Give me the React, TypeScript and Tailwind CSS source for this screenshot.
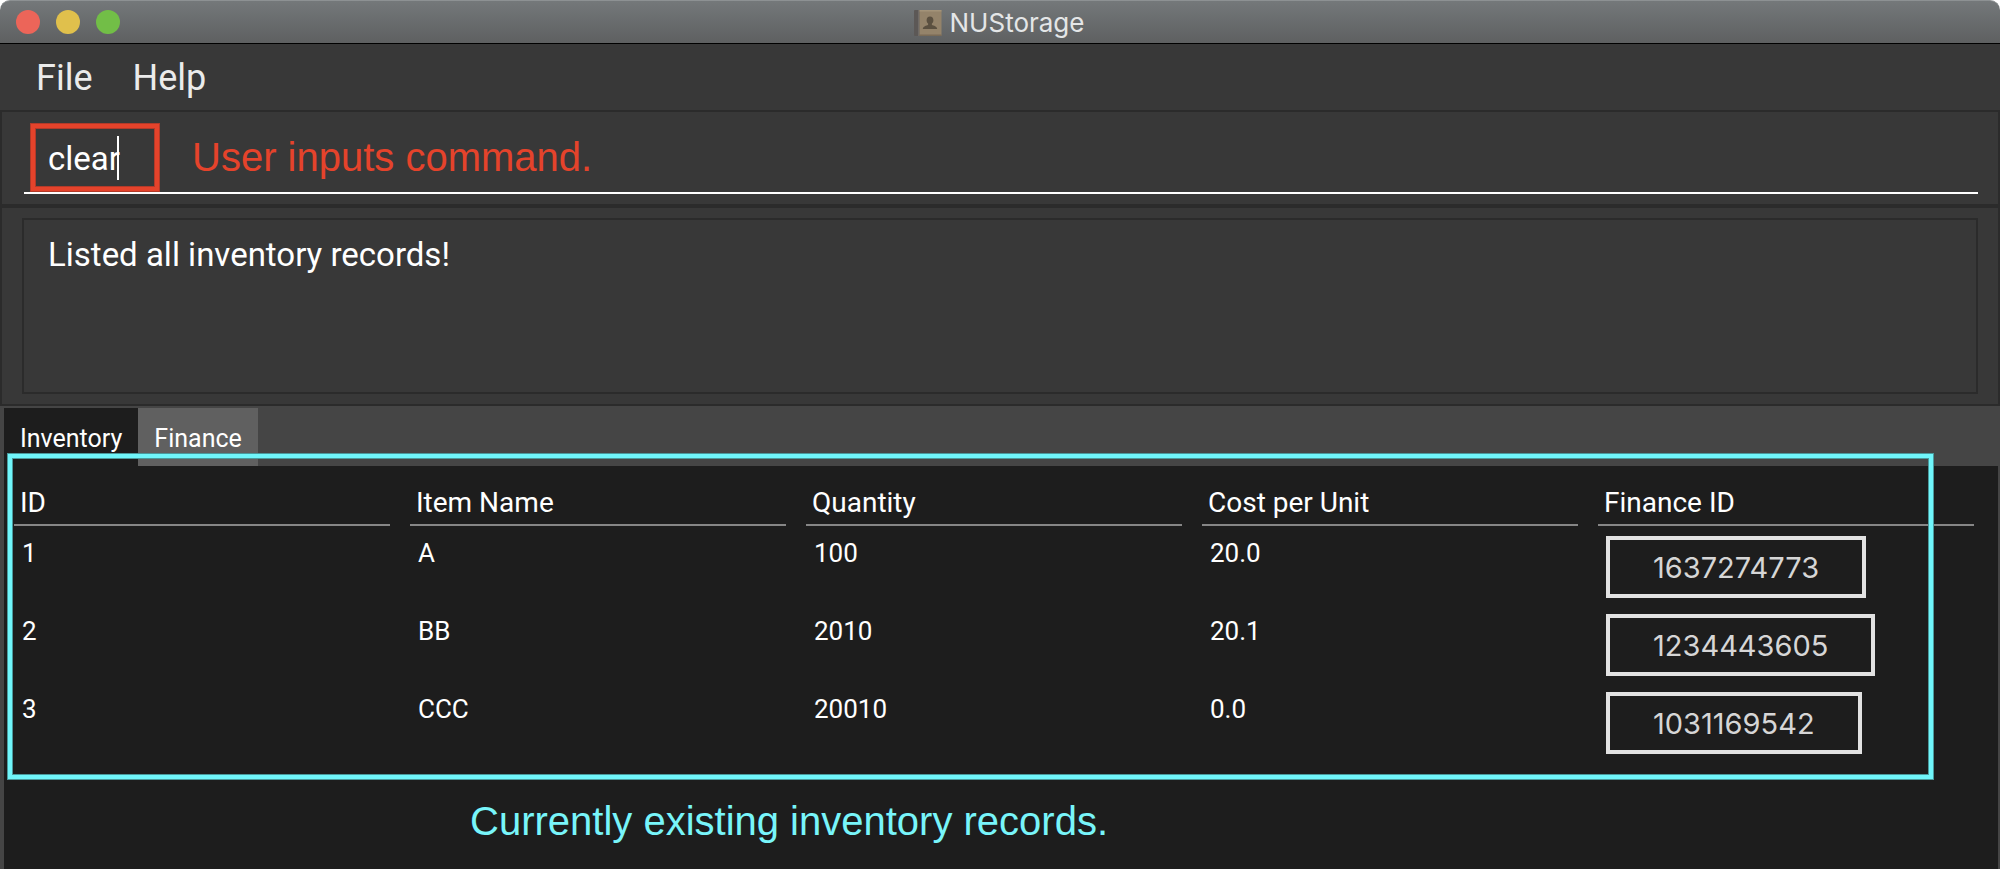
import { useState } from "react";

type InventoryItem = {
  id: number;
  name: string;
  quantity: string;
  cost: string;
  financeId: string;
};

const items: InventoryItem[] = [
  { id: 1, name: "A", quantity: "100", cost: "20.0", financeId: "1637274773" },
  { id: 2, name: "BB", quantity: "2010", cost: "20.1", financeId: "1234443605" },
  { id: 3, name: "CCC", quantity: "20010", cost: "0.0", financeId: "1031169542" },
];

const columns = ["ID", "Item Name", "Quantity", "Cost per Unit", "Finance ID"];

function AddressBookIcon() {
  return (
    <svg width="28" height="26" viewBox="0 0 28 26" aria-hidden="true">
      <rect x="0" y="0" width="6" height="26" rx="1" fill="#5c5856" />
      <rect x="4" y="0" width="1.5" height="26" fill="#6f6a66" />
      <rect x="5.5" y="0" width="22" height="26" rx="1" fill="#94836a" />
      <rect x="5.5" y="0" width="22" height="1.5" fill="#a39379" />
      <rect x="5.5" y="24.5" width="22" height="1.5" fill="#7a6b56" />
      <path
        d="M16 6.5c2.2 0 3.4 1.5 3.4 3.7 0 1.5-.6 2.6-1.5 3.4v1.4c1.9.7 5 1.2 5.3 4H8.8c.3-2.8 3.4-3.3 5.3-4v-1.4c-.9-.8-1.5-1.9-1.5-3.4 0-2.200 1.200-3.700 3.400-3.700z"
        fill="#5b5040"
      />
    </svg>
  );
}

function TitleBar() {
  return (
    <header className="relative flex h-11 items-center justify-center rounded-t-[10px] border-y border-t-[#8d9193] border-b-black bg-linear-to-b from-[#74787a] to-[#5e6061]">
      <div className="absolute left-4 flex gap-4">
        <button aria-label="Close" className="size-6 rounded-full bg-[#ec6559]" />
        <button aria-label="Minimize" className="size-6 rounded-full bg-[#e0c04c]" />
        <button aria-label="Zoom" className="size-6 rounded-full bg-[#72be47]" />
      </div>
      <div className="flex items-center gap-2 pt-[2px] pr-[2px]">
        <AddressBookIcon />
        <h1 className="font-['Inter',sans-serif] text-[26px] leading-8 text-[#e4e6e7]">NUStorage</h1>
      </div>
    </header>
  );
}

function CommandBox() {
  const [command, setCommand] = useState("clear");
  return (
    <section className="relative border-2 border-[#2b2b2b] pt-3 pr-5 pb-[10px] pl-[22px]">
      <input
        aria-label="Command"
        value={command}
        onChange={(e) => setCommand(e.target.value)}
        className="block h-[70px] w-full border-b-2 border-white bg-transparent pl-6 text-[33px] text-white outline-none"
      />
      <span className="absolute top-6 left-[115px] h-11 w-[2px] bg-white" />
      <div className="absolute top-3 left-[29px] h-[67px] w-32 border-4 border-[#e5432b] ring-1 inset-ring-1 ring-[#b33a29] inset-ring-[#b33a29]" />
      <p className="absolute top-[21px] left-[190px] font-['Liberation_Sans',sans-serif] text-[40px] leading-12 text-[#e5432b]">
        User inputs command.
      </p>
    </section>
  );
}

export default function App() {
  const [tab, setTab] = useState("Inventory");
  return (
    <div className="flex min-h-screen flex-col bg-white font-['Roboto',sans-serif]">
      <TitleBar />
      <div className="flex grow flex-col bg-[#383838]">
        <nav className="flex h-[66px] items-center gap-10 px-9 pt-[2px] text-[36px] text-[#ebebeb]">
          <button>File</button>
          <button>Help</button>
        </nav>
        <CommandBox />
        <section className="border-2 border-[#2b2b2b] px-5 py-[10px]">
          <output className="block h-44 border-2 border-[#2b2b2b] px-6 py-3 text-[33px] leading-[46px] text-white">
            Listed all inventory records!
          </output>
        </section>
        <main className="relative flex grow flex-col bg-[#454545] pt-[2px] pr-[2px] pl-1">
          <div role="tablist" className="flex h-[58px] text-[25px] text-white">
            <button
              role="tab"
              aria-selected={tab === "Inventory"}
              onClick={() => setTab("Inventory")}
              className="bg-[#606060] px-4 pt-1 aria-selected:bg-[#1d1d1d]"
            >
              Inventory
            </button>
            <button
              role="tab"
              aria-selected={tab === "Finance"}
              onClick={() => setTab("Finance")}
              className="bg-[#606060] px-4 pt-1 aria-selected:bg-[#1d1d1d]"
            >
              Finance
            </button>
          </div>
          <div role="tabpanel" className="grow bg-[#1d1d1d] pr-[14px]">
            <table className="w-full table-fixed text-left text-white">
              <thead>
                <tr>
                  {columns.map((c) => (
                    <th key={c} scope="col" className="h-15 px-[10px] py-0 align-bottom text-[28px] font-normal">
                      <div className="h-[46px] border-b-2 border-[#868686] pl-1.5 leading-[46px]">{c}</div>
                    </th>
                  ))}
                </tr>
              </thead>
              <tbody className="text-[26px] leading-[34px]">
                {items.map((item) => (
                  <tr key={item.id} className="h-[78px] align-top">
                    <td className="pt-[10px] pl-[18px]">{item.id}</td>
                    <td className="pt-[10px] pl-[18px]">{item.name}</td>
                    <td className="pt-[10px] pl-[18px]">{item.quantity}</td>
                    <td className="pt-[10px] pl-[18px]">{item.cost}</td>
                    <td className="pt-[10px] pl-[18px]">
                      <button className="block h-[62px] border-4 border-[#e2e2e2] px-[43px] pt-[2px] font-['Inter',sans-serif] text-[29px] text-[#d6d6d6]">
                        {item.financeId}
                      </button>
                    </td>
                  </tr>
                ))}
              </tbody>
            </table>
          </div>
          <div className="pointer-events-none absolute top-12 right-[67px] left-2 h-[325px] border-4 border-[#70f6fb] ring-1 inset-ring-1 ring-[#4a9a9d] inset-ring-[#4a9a9d]" />
          <p className="pointer-events-none absolute top-[391px] left-[470px] font-['Liberation_Sans',sans-serif] text-[40px] leading-12 text-[#78f5fa]">
            Currently existing inventory records.
          </p>
        </main>
      </div>
    </div>
  );
}
